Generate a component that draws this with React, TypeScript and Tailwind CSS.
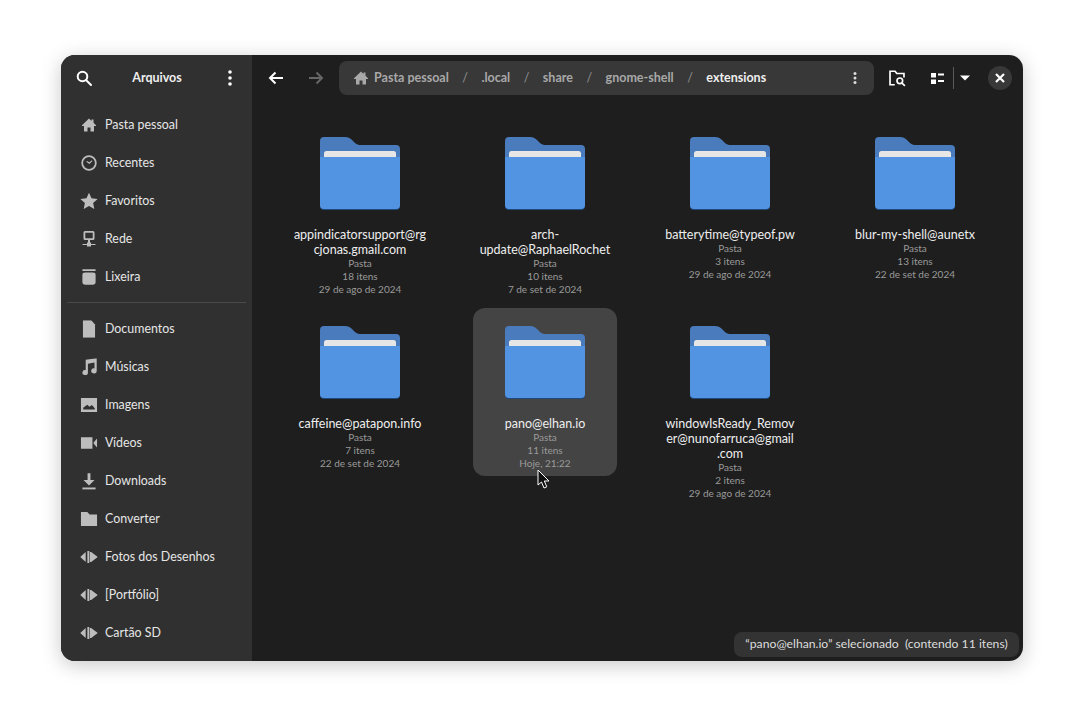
import type { ReactNode } from "react";

const FONT = "font-['Lato','Open_Sans',sans-serif]";

function Icon({ children, className = "" }: { children: ReactNode; className?: string }) {
  return (
    <svg viewBox="0 0 16 16" fill="currentColor" className={`h-4 w-4 shrink-0 ${className}`}>
      {children}
    </svg>
  );
}

const HomeIcon = (
  <Icon>
    <path d="M8 1.500 1 8.200V9h2v5.500h3.500V10.500h3v4H13V9h2v-.8L12.500 5.800V2.500h-2v1.400z" />
  </Icon>
);

const DriveIcon = (
  <Icon className="scale-[1.1]">
    <path d="M0 8l5-4.500v9z" />
    <path d="M6.500 2.500h1.800v11H6.500z" />
    <path d="M8.800 3.500h1.200L16 8l-6 4.500H8.800z" />
  </Icon>
);

const placesTop = [
  { label: "Pasta pessoal", icon: HomeIcon },
  {
    label: "Recentes",
    icon: (
      <Icon className="scale-[1.1]">
        <path
          fillRule="evenodd"
          d="M8 1a7 7 0 1 1 0 14A7 7 0 0 1 8 1zm0 1.600a5.400 5.400 0 1 0 0 10.800A5.400 5.400 0 0 0 8 2.600z"
        />
        <path d="M8.400 8.900 5.500 6.800l.6-.7 2.200 1.300 2.300-1.900.5.6z" />
      </Icon>
    ),
  },
  {
    label: "Favoritos",
    icon: (
      <Icon className="scale-[1.15]">
        <path d="M8 .8l2.200 4.800 5.300.6-3.900 3.600 1 5.200L8 12.400l-4.600 2.600 1-5.200L.5 6.200l5.300-.6z" />
      </Icon>
    ),
  },
  {
    label: "Rede",
    icon: (
      <Icon>
        <path
          fillRule="evenodd"
          d="M4 0h8a1.500 1.500 0 0 1 1.500 1.500v6A1.500 1.500 0 0 1 12 9H4a1.500 1.500 0 0 1-1.500-1.500v-6A1.500 1.500 0 0 1 4 0zm.3 1.800v5.400h7.400V1.800z"
        />
        <path d="M7 9h2v2.500h1V13h4.500v1H10v1.500H6V14H1.500v-1H6v-1.500h1z" />
      </Icon>
    ),
  },
  {
    label: "Lixeira",
    icon: (
      <Icon className="scale-[1.1]">
        <path d="M2 1h12v1.600H2z" />
        <path d="M4.500 4h7c1.700 0 2.500.8 2.500 2v6.500c0 1.500-1 2.500-2.500 2.500h-7C3 15 2 14 2 12.500V6c0-1.200.8-2 2.500-2z" />
      </Icon>
    ),
  },
];

const placesBottom = [
  {
    label: "Documentos",
    icon: (
      <Icon className="scale-[1.1]">
        <path d="M2.500 0H10l3.500 4v12h-11z" />
      </Icon>
    ),
  },
  {
    label: "Músicas",
    icon: (
      <Icon className="scale-[1.1]">
        <path d="M5 1.500 15 0v11.500a2.500 2.300 0 1 1-2-2.200V4L7 5v8a2.500 2.300 0 1 1-2-2.200z" />
      </Icon>
    ),
  },
  {
    label: "Imagens",
    icon: (
      <Icon className="scale-[1.15]">
        <path
          fillRule="evenodd"
          d="M1 2h14v12H1zm2 8.500V12h10v-1.200L10.500 8l-2 1.500-2-1.800z"
        />
      </Icon>
    ),
  },
  {
    label: "Vídeos",
    icon: (
      <Icon className="scale-[1.15]">
        <path d="M1 3h10v10H1zM12 7.500 15 4v8l-3-3.500z" />
      </Icon>
    ),
  },
  {
    label: "Downloads",
    icon: (
      <Icon className="scale-[1.1]">
        <path d="M6.700 1h2.600v6H13l-5 5-5-5h3.700zM2 14h12v1.800H2z" />
      </Icon>
    ),
  },
  {
    label: "Converter",
    icon: (
      <Icon className="scale-[1.15]">
        <path d="M1 2h5.500l2 2H15v10H1z" />
      </Icon>
    ),
  },
  { label: "Fotos dos Desenhos", icon: DriveIcon },
  { label: "[Portfólio]", icon: DriveIcon },
  { label: "Cartão SD", icon: DriveIcon },
];

const folders = [
  { name: "appindicatorsupport@rg\ncjonas.gmail.com", items: "18 itens", date: "29 de ago de 2024" },
  { name: "arch-\nupdate@RaphaelRochet", items: "10 itens", date: "7 de set de 2024" },
  { name: "batterytime@typeof.pw", items: "3 itens", date: "29 de ago de 2024" },
  { name: "blur-my-shell@aunetx", items: "13 itens", date: "22 de set de 2024" },
  { name: "caffeine@patapon.info", items: "7 itens", date: "22 de set de 2024" },
  { name: "pano@elhan.io", items: "11 itens", date: "Hoje, 21:22", selected: true },
  { name: "windowIsReady_Remov\ner@nunofarruca@gmail\n.com", items: "2 itens", date: "29 de ago de 2024" },
];

const crumbs = [".local", "share", "gnome-shell"];

function FolderIcon() {
  return (
    <svg viewBox="0 0 80 73" className="h-[73px] w-[80px] shrink-0">
      <path
        d="M0 4a4 4 0 0 1 4-4h21c3 0 5 1 7 3l3 3c2 1.500 3 2 6 2h35a4 4 0 0 1 4 4v50H0z"
        fill="#4a7bbd"
      />
      <rect x="4" y="14" width="72" height="10" rx="2.500" fill="#e6e6e6" />
      <path d="M0 20h80v49a4 4 0 0 1-4 4H4a4 4 0 0 1-4-4z" fill="#1f4a80" />
      <path d="M0 20h80v48a4 4 0 0 1-4 4H4a4 4 0 0 1-4-4z" fill="#5294e2" />
    </svg>
  );
}

function SidebarRow({ label, icon }: { label: string; icon: ReactNode }) {
  return (
    <div className="flex h-[38px] items-center pl-[20px] text-[12.400px] text-[#e6e6e6]">
      <span className="flex w-[24px] text-[#bdbdbd]">{icon}</span>
      <span className="pt-[1px]">{label}</span>
    </div>
  );
}

function FolderCell({ name, items, date, selected }: (typeof folders)[number]) {
  return (
    <div className="flex items-start justify-center">
      <div
        className={`flex w-[144px] flex-col items-center rounded-[12px] pt-[18px] pb-[6px] text-center ${
          selected ? "bg-[#444444]" : ""
        }`}
      >
        <FolderIcon />
        <div className="mt-[17px] whitespace-pre-line text-[12.500px] leading-[15px] text-[#eeeeee]">{name}</div>
        <div className="text-[10px] leading-[13px] text-[#9a9a9a]">
          <div>Pasta</div>
          <div>{items}</div>
          <div>{date}</div>
        </div>
      </div>
    </div>
  );
}

export default function App() {
  return (
    <div className={`h-[728px] w-[1084px] overflow-hidden bg-white pl-[61px] pt-[55px] ${FONT}`}>
      <div className="relative flex h-[606px] w-[962px] overflow-hidden rounded-[14px] bg-[#1e1e1e] shadow-[0_4px_20px_rgba(0,0,0,0.22)]">
        {/* Sidebar */}
        <aside className="flex w-[191px] shrink-0 flex-col bg-[#303030]">
          <div className="flex h-[46px] shrink-0 items-center justify-between pl-[15px] pr-[14px] text-white">
            <svg viewBox="0 0 16 16" className="h-4 w-4" fill="none" stroke="currentColor" strokeWidth="2">
              <circle cx="6.500" cy="6.500" r="4.800" />
              <path d="M10 10l5 5" strokeLinecap="round" />
            </svg>
            <span className="text-[12.500px] font-bold text-[#eeeeee]">Arquivos</span>
            <svg viewBox="0 0 16 16" className="h-4 w-4" fill="currentColor">
              <circle cx="8" cy="2" r="1.800" />
              <circle cx="8" cy="8" r="1.800" />
              <circle cx="8" cy="14" r="1.800" />
            </svg>
          </div>
          <div className="pt-[4.500px]">
            {placesTop.map((place) => (
              <SidebarRow key={place.label} {...place} />
            ))}
          </div>
          <div className="mx-[6px] my-[6.500px] h-px bg-[#4a4a4a]" />
          <div>
            {placesBottom.map((place) => (
              <SidebarRow key={place.label} {...place} />
            ))}
          </div>
        </aside>

        {/* Main */}
        <main className="flex min-w-0 flex-1 flex-col">
          <header className="flex h-[46px] shrink-0 items-center">
            <div className="flex w-[87px] shrink-0 items-center pl-[16px]">
              <svg viewBox="0 0 16 16" className="h-4 w-4 text-white" fill="none" stroke="currentColor" strokeWidth="2">
                <path d="M15 8H2M7.500 2.500 2 8l5.500 5.500" />
              </svg>
              <svg viewBox="0 0 16 16" className="ml-[24px] h-4 w-4 text-[#666666]" fill="none" stroke="currentColor" strokeWidth="2">
                <path d="M1 8h13M8.500 2.500 14 8l-5.500 5.500" />
              </svg>
            </div>
            <div className="flex h-[34px] w-[535px] shrink-0 items-center rounded-[8px] bg-[#383838] pl-[14px] pr-[11px] text-[12.500px] font-bold text-[#a8a8a8]">
              <span className="text-[#a8a8a8]">{HomeIcon}</span>
              <span className="ml-[5px]">Pasta pessoal</span>
              {crumbs.map((crumb) => (
                <span key={crumb} className="flex">
                  <span className="mx-[13.500px] font-normal text-[#909090]">/</span>
                  <span>{crumb}</span>
                </span>
              ))}
              <span className="mx-[13.500px] font-normal text-[#909090]">/</span>
              <span className="font-bold text-[#eeeeee]">extensions</span>
              <svg viewBox="0 0 16 16" className="ml-auto h-4 w-4 text-[#dddddd]" fill="currentColor">
                <circle cx="8" cy="3.500" r="1.500" />
                <circle cx="8" cy="8" r="1.500" />
                <circle cx="8" cy="12.500" r="1.500" />
              </svg>
            </div>
            <svg viewBox="0 0 16 16" className="ml-[14px] h-[18px] w-[18px] text-white" fill="none" stroke="currentColor" strokeWidth="1.500">
              <path d="M6 14H1.800V2h4.500l1.500 2h6.400v3.500" />
              <circle cx="10.500" cy="10.500" r="2.500" />
              <path d="M12.500 12.500 15 15" />
            </svg>
            <svg viewBox="0 0 16 16" className="ml-[23px] h-4 w-4 text-white" fill="currentColor">
              <path d="M2 3h5v4.500H2zM2 9.500h5V14H2zM9 3.500h6v2H9zM9 10h6v2H9z" />
            </svg>
            <div className="ml-[8px] h-[22px] w-px bg-[#5a5a5a]" />
            <svg viewBox="0 0 16 16" className="ml-[3px] h-4 w-4 text-white" fill="currentColor">
              <path d="M3 5.500h10L8 10.500z" />
            </svg>
            <div className="ml-[15px] flex h-[24px] w-[24px] items-center justify-center rounded-full bg-[#383838] text-white">
              <svg viewBox="0 0 16 16" className="h-4 w-4" fill="none" stroke="currentColor" strokeWidth="2.200">
                <path d="M4 4l8 8M12 4l-8 8" />
              </svg>
            </div>
          </header>
          <div className="grid grid-cols-[repeat(4,185px)] content-start gap-y-[6px] pl-[15.500px] pt-[18px]">
            {folders.map((folder) => (
              <FolderCell key={folder.name} {...folder} />
            ))}
          </div>
        </main>

        {/* Status overlay */}
        <div className="absolute bottom-[4px] right-[4px] flex h-[25px] w-[285px] items-center justify-center whitespace-pre rounded-[8px] bg-[#333333] text-[12.200px] text-[#dddddd]">
          {"“pano@elhan.io” selecionado  (contendo 11 itens)"}
        </div>

        {/* Mouse cursor */}
        <svg viewBox="0 0 14 21" className="absolute left-[476px] top-[414px] h-[21px] w-[14px]">
          <path
            d="M1 1v15l3.500-3 2.500 6 2.800-1.200-2.500-5.800H12z"
            fill="#111111"
            stroke="#ffffff"
            strokeWidth="1"
            strokeLinejoin="round"
          />
        </svg>
      </div>
    </div>
  );
}
